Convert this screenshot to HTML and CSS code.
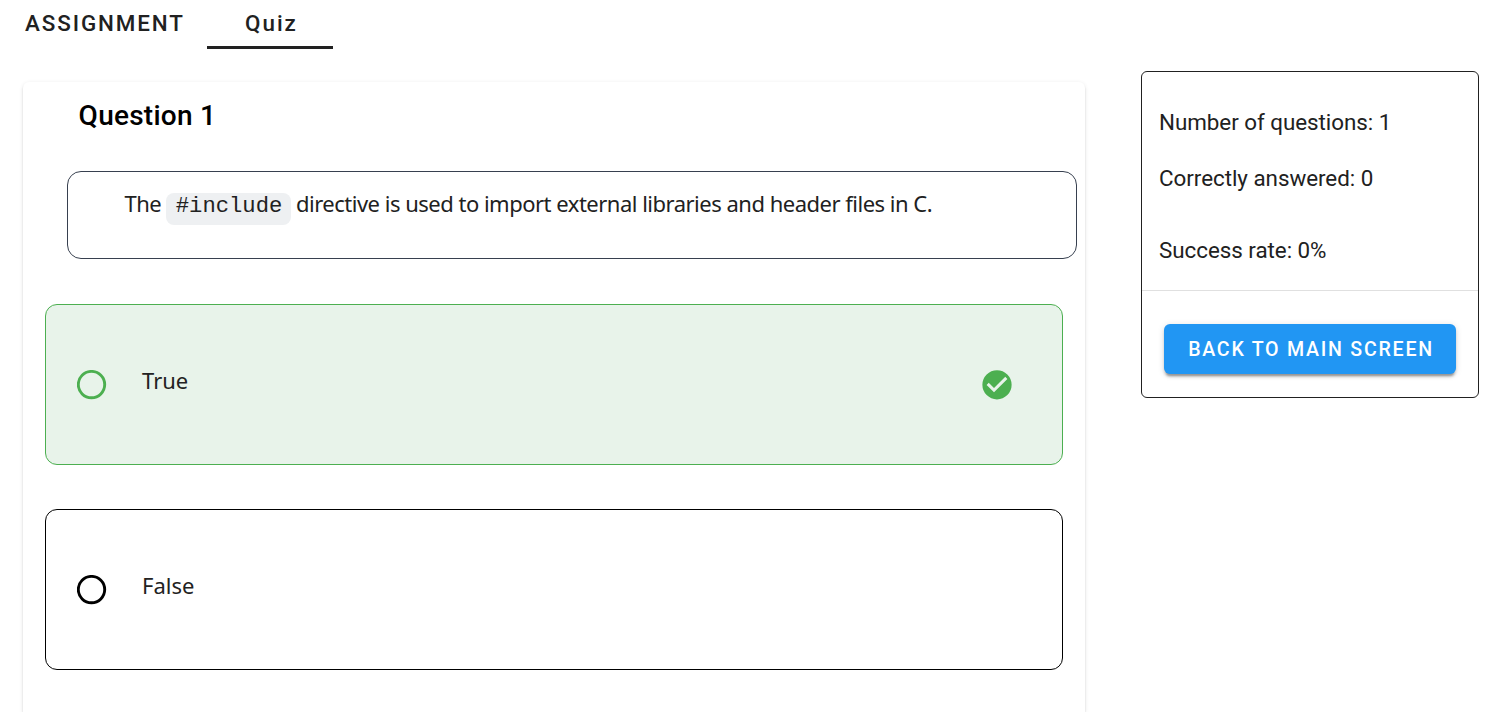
FILE: index.html
```html
<!DOCTYPE html>
<html lang="en">
<head>
<meta charset="utf-8">
<title>Quiz</title>
<link rel="stylesheet" href="styles.css">
</head>
<body>
<nav class="tabs">
  <a class="tab tab-assignment"><span>ASSIGNMENT</span></a>
  <a class="tab tab-quiz"><span>Quiz</span></a>
</nav>
<main class="layout">
  <section class="quiz-card">
    <h1 class="title"><span>Question 1</span></h1>
    <div class="question"><span class="q-the">The</span><code class="code">#include</code><span class="q-rest">directive is used to import external libraries and header files in C.</span></div>
    <div class="answer answer-correct">
      <svg class="icon" viewBox="0 0 30 30"><circle cx="14.5" cy="14.6" r="13.2" fill="none" stroke="currentColor" stroke-width="2.9"/></svg>
      <span class="label label-true">True</span>
      <svg class="icon" viewBox="0 0 24 24"><path fill="currentColor" fill-rule="evenodd" d="M12 .1a11.7 11.7 0 1 0 0 23.4A11.7 11.7 0 0 0 12 .1zM9.6 17.8l-5.9-5.9 1.7-1.7 4.2 4.2 9-9 1.7 1.7z"/></svg>
    </div>
    <div class="answer">
      <svg class="icon" viewBox="0 0 30 30"><circle cx="14.5" cy="14.6" r="13.2" fill="none" stroke="currentColor" stroke-width="2.9"/></svg>
      <span class="label label-false">False</span>
    </div>
  </section>
  <aside class="summary">
    <div class="stats">
      <p class="stat"><span>Number of questions: 1</span></p>
      <p class="stat"><span>Correctly answered: 0</span></p>
      <p class="stat stat-rate"><span>Success rate: 0%</span></p>
    </div>
    <div class="actions"><button class="back"><span>BACK TO MAIN SCREEN</span></button></div>
  </aside>
</main>
</body>
</html>
```
FILE: styles.css
```css
* { box-sizing: border-box; }
body {
  display: flex;
  flex-direction: column;
  margin: 0;
  height: 712px;
  overflow: hidden;
  background: #fff;
  color: #212121;
  font-family: Roboto, "Liberation Sans", sans-serif;
  font-size: 22.4px;
}
.tabs { display: flex; flex: none; height: 49px; }
.tab {
  height: 49px;
  line-height: 47px;
  font-weight: 500;
  font-size: 22.4px;
  letter-spacing: 1.9px;
  white-space: nowrap;
}
.tab-assignment { width: 207px; padding-left: 25px; }
.tab-quiz { width: 126px; padding-left: 38px; border-bottom: 3px solid #212121; letter-spacing: 2px; }
.layout { display: flex; flex: 1; align-items: flex-start; padding: 22px 14px 0 23px; gap: 56px; }
.quiz-card {
  align-self: stretch;
  width: 1062px;
  margin-top: 11px;
  padding: 0 22px;
  border-radius: 6px 6px 0 0;
  box-shadow: 0 2px 2px rgba(0,0,0,.12), 0 1px 4px rgba(0,0,0,.1);
}
.title {
  margin: 0;
  height: 89px;
  padding-left: 33.6px;
  color: #000;
  font-size: 28px;
  font-weight: 500;
  line-height: 67px;
  letter-spacing: .25px;
}
.question {
  display: flex;
  align-items: flex-start;
  width: 1010px;
  height: 88px;
  margin-left: 22px;
  padding: 15px 0 0 56.5px;
  border: 1px solid #37404f;
  border-radius: 14px;
  font-family: "Noto Sans", sans-serif;
  font-size: 22px;
  line-height: 32px;
  white-space: nowrap;
}
.q-the { width: 41.5px; letter-spacing: -.5px; }
.q-rest { letter-spacing: -.5px; }
.code {
  width: 125px;
  height: 32px;
  margin: 6px 5px 0 0;
  padding-left: 9.8px;
  border-radius: 8px;
  background: #eef0f2;
  font: 22.2px/28px "Courier New", "Liberation Mono", monospace;
}
.answer {
  display: flex;
  align-items: center;
  width: 1018px;
  height: 161px;
  margin-top: 45px;
  padding: 0 50px 0 31px;
  border: 1px solid #000;
  border-radius: 12px;
  color: #000;
}
.answer + .answer { margin-top: 44px; }
.answer-correct { background: #e8f3ea; border-color: #4caf50; color: #4caf50; }
.icon { flex: none; width: 30px; height: 30px; }
.label {
  flex: 1;
  margin: -10px 0 0 35px;
  color: #222;
  font-family: "Noto Sans", sans-serif;
  font-size: 22px;
  line-height: 32px;
}
.summary { width: 338px; height: 327px; border: 1px solid #212121; border-radius: 6px; }
.stats { height: 219px; padding: 34px 17px 0; border-bottom: 1px solid #e0e0e0; }
.stat { margin: 0 0 24px; line-height: 32px; letter-spacing: -.04px; white-space: nowrap; }
.stat-rate { margin-top: 40px; }
.actions { padding: 33px 22px 0; }
.back {
  display: block;
  width: 292px;
  height: 50px;
  padding: 2px 0 0 2px;
  border: 0;
  border-radius: 6px;
  background: #2196f3;
  color: #fff;
  font: 500 19.6px/48px Roboto, sans-serif;
  letter-spacing: 1.75px;
  white-space: nowrap;
  box-shadow: 0 4px 2px -2px rgba(0,0,0,.25), 0 3px 3px rgba(0,0,0,.16), 0 1px 7px rgba(0,0,0,.12);
}
```
